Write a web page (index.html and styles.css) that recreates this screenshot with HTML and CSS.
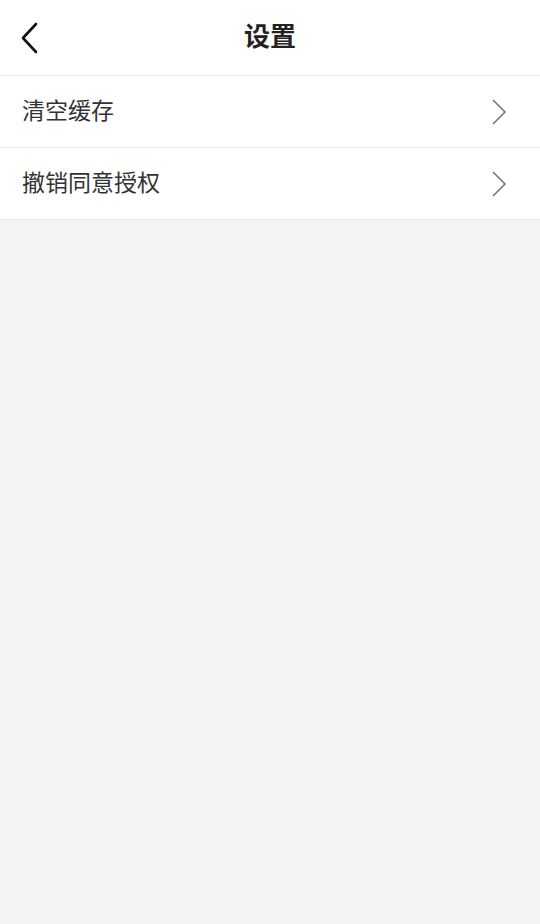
FILE: index.html
```html
<!DOCTYPE html>
<html>
<head>
<meta charset="utf-8">
<link rel="stylesheet" href="styles.css">
</head>
<body>
<div class="page">
  <header class="nav">
    <div class="back">
      <svg width="20" height="32" viewBox="0 0 20 32"><path d="M16 2 L3 16 L16 30" fill="none" stroke="#111" stroke-width="2.6" stroke-linecap="round" stroke-linejoin="round"/></svg>
    </div>
    <h1 class="title">设置</h1>
  </header>
  <ul class="list">
    <li class="row"><span class="label">清空缓存</span>
      <svg class="arrow" width="16" height="26" viewBox="0 0 16 26"><path d="M2 1 L14 13 L2 25" fill="none" stroke="#777" stroke-width="1.6"/></svg>
    </li>
    <li class="row"><span class="label">撤销同意授权</span>
      <svg class="arrow" width="16" height="26" viewBox="0 0 16 26"><path d="M2 1 L14 13 L2 25" fill="none" stroke="#777" stroke-width="1.6"/></svg>
    </li>
  </ul>
</div>
</body>
</html>
```
FILE: styles.css
```css
* { box-sizing: border-box; margin: 0; padding: 0; }
html, body { width: 540px; height: 924px; }
body { background: #f2f3f5; font-family: "Noto Sans CJK SC", "Noto Sans", sans-serif; }
.page { display: flex; flex-direction: column; }
.nav {
  height: 76px;
  background: #fff;
  border-bottom: 1px solid #e8e8e8;
  display: flex;
  align-items: center;
  justify-content: center;
  position: relative;
}
.back { position: absolute; left: 20px; top: 22px; display: flex; }
.title { font-size: 26px; font-weight: 700; color: #222; line-height: 1; margin-top: -5px; }
.list { list-style: none; background: #fff; }
.row {
  height: 72px;
  display: flex;
  align-items: center;
  justify-content: space-between;
  padding: 0 33px 0 22px;
  border-bottom: 1px solid #e8e8e8;
}
.label { font-size: 23px; color: #333; line-height: 1; margin-top: -4px; }
.arrow { display: block; }
```
